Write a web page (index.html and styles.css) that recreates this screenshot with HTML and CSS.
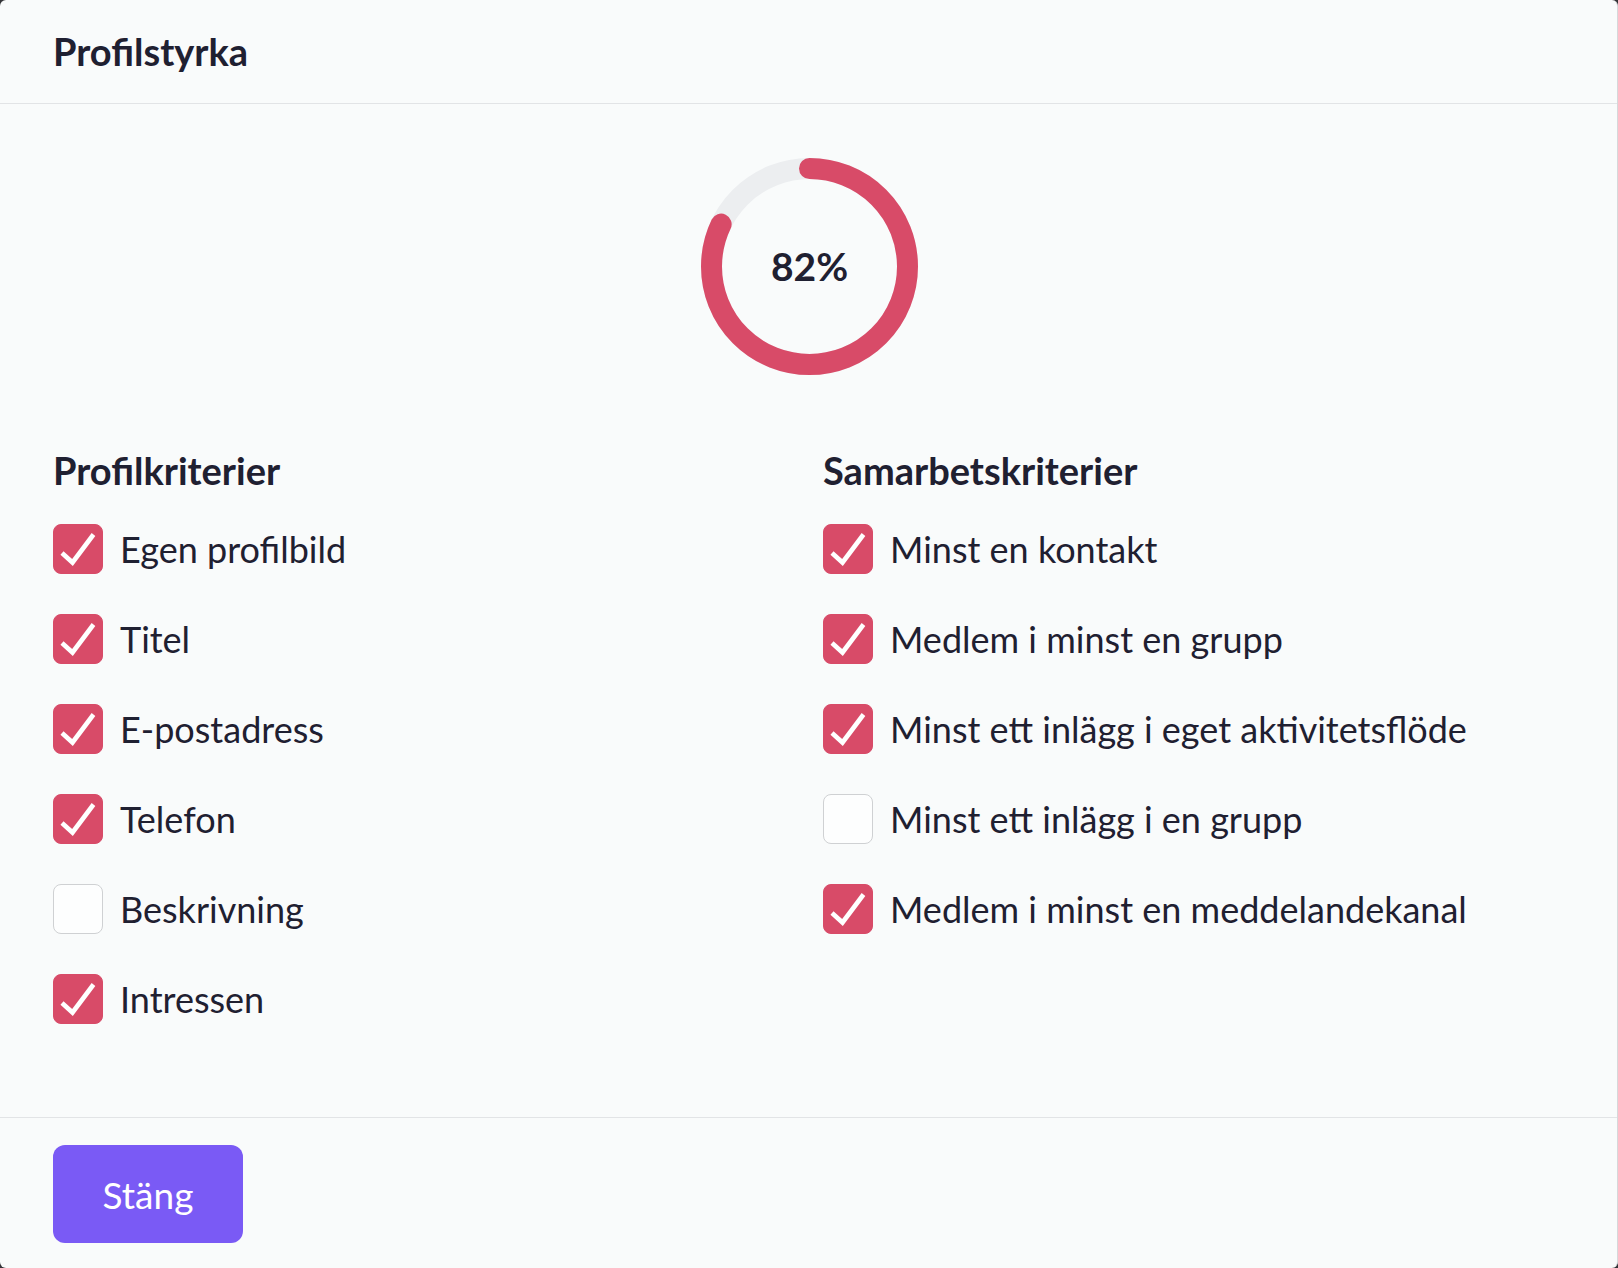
FILE: index.html
```html
<!DOCTYPE html>
<html lang="sv">
<head>
<meta charset="UTF-8">
<meta name="viewport" content="width=device-width, initial-scale=1.0">
<title>Profilstyrka</title>
<link rel="stylesheet" href="styles.css">
</head>
<body>
<div class="modal">
  <div class="modal-header">
    <div class="modal-title">Profilstyrka</div>
  </div>

  <div class="modal-body">
    <div class="meter">
      <svg width="217" height="217" viewBox="0 0 217 217">
        <circle class="meter-track" cx="108.5" cy="108.5" r="98"></circle>
        <circle class="meter-bar" cx="108.5" cy="108.5" r="98"
                stroke-dasharray="504.9 615.8" transform="rotate(-90 108.5 108.5)"></circle>
      </svg>
      <div class="meter-value">82%</div>
    </div>

    <div class="criteria">
      <div class="group">
        <div class="group-title">Profilkriterier</div>
        <div class="item"><span class="box checked"></span>Egen profilbild</div>
        <div class="item"><span class="box checked"></span>Titel</div>
        <div class="item"><span class="box checked"></span>E-postadress</div>
        <div class="item"><span class="box checked"></span>Telefon</div>
        <div class="item"><span class="box"></span>Beskrivning</div>
        <div class="item"><span class="box checked"></span>Intressen</div>
      </div>
      <div class="group">
        <div class="group-title">Samarbetskriterier</div>
        <div class="item"><span class="box checked"></span>Minst en kontakt</div>
        <div class="item"><span class="box checked"></span>Medlem i minst en grupp</div>
        <div class="item"><span class="box checked"></span>Minst ett inlägg i eget aktivitetsflöde</div>
        <div class="item"><span class="box"></span>Minst ett inlägg i en grupp</div>
        <div class="item"><span class="box checked"></span>Medlem i minst en meddelandekanal</div>
      </div>
    </div>
  </div>

  <div class="modal-footer">
    <button class="btn-close">Stäng</button>
  </div>
</div>

<script>
// draw the tick in every checked box
document.querySelectorAll(".box.checked").forEach(b => {
  b.innerHTML = '<svg width="50" height="50" viewBox="0 0 50 50"><path d="M9 29 L19.5 38.5 L40.5 10.5" fill="none" stroke="#fff" stroke-width="4.6"/></svg>';
});
</script>
</body>
</html>
```

FILE: styles.css
```css
* { margin: 0; padding: 0; box-sizing: border-box; }
body {
  font-family: Lato, 'Liberation Sans', sans-serif;
  background: #343438;
  color: #1f2031;
  width: 1618px; height: 1268px;
  overflow: hidden;
}
.modal {
  width: 1618px; height: 1268px;
  background: #f9fbfb;
  border-right: 1px solid #d6d8da;
  border-radius: 6px;
  display: flex; flex-direction: column;
}
.modal-header {
  height: 104px; padding: 0 53px;
  border-bottom: 1px solid #e2e4e6;
  display: flex; align-items: center;
}
.modal-title { font-size: 38px; font-weight: bold; line-height: 1.2; }

.modal-body { flex: 1; padding: 54px 53px 0; }

.meter { position: relative; width: 217px; height: 217px; margin: 0 auto 73px; left: 1px; }
.meter svg { display: block; }
.meter circle { fill: none; stroke-width: 21; }
.meter-track { stroke: #eceef0; }
.meter-bar { stroke: #d84b68; stroke-linecap: round; }
.meter-value {
  position: absolute; inset: 0;
  display: flex; align-items: center; justify-content: center;
  font-size: 39px; font-weight: bold; padding-bottom: 2px;
}

.criteria { display: grid; grid-template-columns: 1fr 1fr; column-gap: 29px; }
.group { display: flex; flex-direction: column; gap: 40px; }
.group-title { font-size: 38px; font-weight: bold; line-height: 1.2; margin-bottom: -10px; }
.item { display: flex; align-items: center; gap: 17px; font-size: 36px; line-height: 50px; }
.box {
  width: 50px; height: 50px; flex-shrink: 0;
  border: 1px solid #cfd1d3; border-radius: 8px;
  background: #fdfefe;
}
.box.checked { background: #d84b68; border-color: #d84b68; }
.box svg { display: block; margin: -1px; }

.modal-footer {
  border-top: 1px solid #e2e4e6;
  padding: 27px 53px 25px;
}
.btn-close {
  width: 190px; height: 98px;
  background: #7a5af5; color: #fff;
  border: none; border-radius: 12px;
  font-family: inherit; font-size: 37px;
  cursor: pointer;
}
```
